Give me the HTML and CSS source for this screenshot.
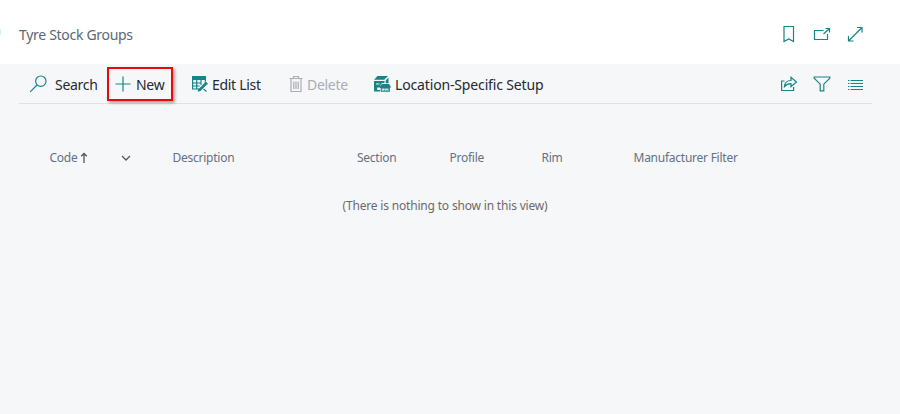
FILE: index.html
```
<!DOCTYPE html>
<html lang="en">
<head>
<meta charset="utf-8">
<title>Tyre Stock Groups</title>
<link rel="stylesheet" href="styles.css">
</head>
<body>
<header class="header">
  <span class="edge-dot"></span>
  <h1 class="title">Tyre Stock Groups</h1>
  <div class="icons">
    <svg class="icon" viewBox="0 0 18 18"><path d="M4 1.5h9.5v15L8.8 14 4 16.5z"/></svg>
    <svg class="icon" viewBox="0 0 18 18"><path d="M10.5 5.5H1.5v9h13V9M10.5 9 16.5 3.5M12.5 3.5h4v4"/></svg>
    <svg class="icon" viewBox="0 0 18 18"><path d="M2.5 16 16 2.5M11 2.5h5v5M2.5 11v5h5"/></svg>
  </div>
</header>
<main class="page">
  <nav class="toolbar">
    <button class="action search"><svg class="icon" viewBox="0 0 18 18"><circle cx="11.8" cy="6.2" r="5.2"/><path d="M8 10 1.2 16.8"/></svg><span>Search</span></button>
    <button class="action new"><svg class="icon" viewBox="0 0 18 18"><path d="M1.5 9h15M9 1.5v15"/></svg><span>New</span></button>
    <button class="action edit"><svg class="icon" viewBox="0 0 18 18"><path class="solid" d="M1 1h14v4H1z"/><path d="M1.6 4v10h6M5.7 5v9M10 5v5M1.6 8h9M1.6 11h7M14.4 4v2"/><path class="pen" d="M8.5 15 15 8.5"/><path class="solid" d="m14.2 6 2.8 2.8-1 1-2.8-2.8zM7.4 13.2l2.6 2.6-3.3 1z"/><path d="m12.5 14 3 2.5"/></svg><span>Edit List</span></button>
    <button class="action delete" disabled><svg class="icon" viewBox="0 0 18 18"><path d="M2.5 3.5h13M6.5 3V1.5h5V3M4 4v12.5h10V4M6.8 6.5v7.5M9 6.5v7.5M11.2 6.5v7.5"/></svg><span>Delete</span></button>
    <button class="action location"><svg class="icon" viewBox="0 0 18 18"><path class="solid" d="M4.5 1H15l-3.8 3.8H1zM1 6h10.5v2H9l-2 2.4v2.1H4.2V15H7v1.5H1zM12.7 5.4 15.5 2.5v5.8h-2.8zM9 9h7l1.5 2v2H7v-2zM7.7 12.5h9.2v4.2H7.7z"/><path class="cut" d="M3 9h3.5M9.3 13.5v1.7h1.4v-1.7M12 13.5v1.7h1.3v-1.7M14.7 13.5v1.7h1"/></svg><span>Location-Specific Setup</span></button>
    <div class="icons">
      <svg class="icon" viewBox="0 0 18 18"><path d="M4.5 6H1.6v9.5h12V12M4.5 11.5c.3-4 2.5-6 6.5-6V2.3L16.5 7 11 11.6V8.7c-3 0-4.8.8-6.5 2.8z"/></svg>
      <svg class="icon" viewBox="0 0 18 18"><path d="M1.2 2h15.6v1.2l-6 6v6.6H7.2V9.2l-6-6z"/></svg>
      <svg class="icon" viewBox="0 0 18 18"><path d="M4.5 5.5H17M4.5 8.5H17M4.5 11.5H17M4.5 14.5H17M2 5.5h1.5M2 8.5h1.5M2 11.5h1.5M2 14.5h1.5"/></svg>
    </div>
  </nav>
  <section class="list">
    <div class="columns">
      <div class="sorted"><span>Code</span><svg class="arrow" viewBox="0 0 8 12"><path d="M4 11V1.5M1.2 4.3 4 1.5l2.8 2.8"/></svg><svg class="chevron" viewBox="0 0 10 8"><path d="m1 2 4 4 4-4"/></svg></div>
      <div>Description</div>
      <div>Section</div>
      <div>Profile</div>
      <div>Rim</div>
      <div>Manufacturer Filter</div>
    </div>
    <p class="empty">(There is nothing to show in this view)</p>
  </section>
</main>
</body>
</html>
```
FILE: styles.css
```
* { box-sizing: border-box; }
body {
  margin: 0;
  height: 414px;
  overflow: hidden;
  background: #f6f7f9;
  font-family: "Noto Sans", "Open Sans", sans-serif;
}
.header {
  position: relative;
  display: flex;
  align-items: center;
  justify-content: space-between;
  height: 64px;
  padding: 4px 36px 0 19px;
  background: #fff;
}
.edge-dot {
  position: absolute;
  left: -15px;
  top: 24px;
  width: 16px;
  height: 16px;
  border-radius: 50%;
  background: #c5eef0;
}
.title {
  margin: 0;
  font-size: 14px;
  font-weight: 400;
  letter-spacing: -0.3px;
  color: #5c6776;
}
.icons { display: flex; gap: 15px; }
.icon {
  flex: none;
  width: 18px;
  height: 18px;
  fill: none;
  stroke: #178488;
  stroke-width: 1.2;
}
.icon .solid { fill: #178488; stroke: none; }
.icon .pen { stroke-width: 2.6; }
.icon .cut { stroke: #f6f7f9; stroke-width: 1; }
.toolbar {
  display: flex;
  align-items: center;
  height: 40px;
  margin: 0 28px 0 19px;
  border-bottom: 1px solid #dfe1e5;
}
.toolbar .icons { margin-left: auto; margin-right: 8px; }
.action {
  display: flex;
  align-items: center;
  height: 34px;
  padding: 0;
  border: 0;
  background: none;
  font: 14px "Noto Sans", "Open Sans", sans-serif;
  letter-spacing: -0.3px;
  white-space: nowrap;
  color: #242a31;
}
.action span { padding-top: 1px; }
.search { width: 78px; margin-left: 10px; gap: 8px; }
.new {
  width: 66px;
  padding-left: 5px;
  gap: 4px;
  border: 2px solid #eb0808;
  box-shadow: 2px 2px 3px #0005;
}
.edit { width: 96px; margin-left: 18px; gap: 3px; }
.delete { width: 86px; gap: 2px; color: #a9adb5; }
.delete .icon { stroke: #a9adb5; }
.location { gap: 4px; letter-spacing: -0.15px; }
.columns {
  display: grid;
  grid-template-columns: 123px 184.5px 92.5px 92px 92px 200px;
  margin-top: 45px;
  padding-left: 49.5px;
  font-size: 12px;
  line-height: 18px;
  letter-spacing: -0.25px;
  color: #657181;
}
.sorted { display: flex; align-items: center; }
.arrow, .chevron { fill: none; stroke: #505762; stroke-width: 1.3; }
.arrow { width: 8px; height: 12px; margin-left: 2px; }
.chevron { width: 10px; height: 8px; margin-left: 33px; }
.empty {
  margin: 30px 0 0 342.5px;
  font-size: 12px;
  line-height: 18px;
  letter-spacing: -0.18px;
  color: #6b6b6b;
}
```
